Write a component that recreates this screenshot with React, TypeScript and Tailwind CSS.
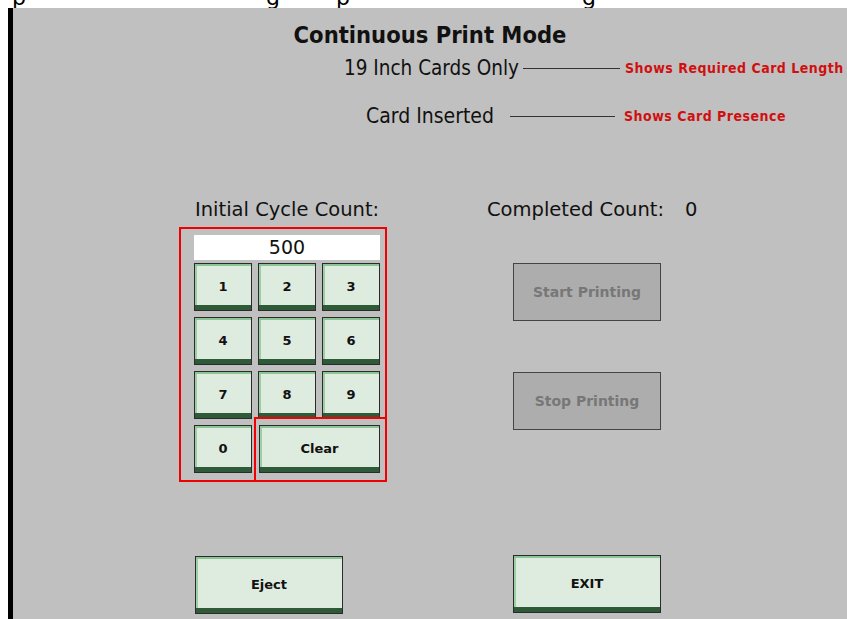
import React from 'react';

const KeyButton = ({ label, className }: { label: string; className: string }) => (
  <button
    className={`flex items-center justify-center border border-[#2b2b2b] bg-[#deebdf] text-[13px] font-bold text-[#111] shadow-[inset_0_-5px_0_#2f5a38,inset_0_2px_0_#8cc595,inset_2px_0_0_#9ccfa3] ${className}`}
  >
    <span className="-mt-[1px]">{label}</span>
  </button>
);

const GrayButton = ({ label }: { label: string }) => (
  <button className="flex h-[58px] w-[148px] items-center justify-center border border-[#444] bg-[#adadad] text-[14px] font-bold text-[#777]">
    {label}
  </button>
);

export default function App() {
  const keys = ['1', '2', '3', '4', '5', '6', '7', '8', '9'];

  return (
    <div className="flex h-[619px] w-[847px] flex-col overflow-hidden bg-white font-['DejaVu_Sans',sans-serif] text-[#111]">
      {/* clipped line of text above the window */}
      <div className="h-[8px] overflow-hidden">
        <div className="-mt-[15px] flex text-[22px] leading-[26px] text-black">
          <span className="w-[266px] pl-[12px]">p</span>
          <span className="w-[70px]">g</span>
          <span className="w-[246px]">p</span>
          <span>g</span>
        </div>
      </div>

      <div className="flex flex-1 pl-[8px]">
        <div className="w-[5px] bg-black" />
        <div className="flex flex-1 flex-col bg-[#c0c0c0]">
          <h1 className="mt-[13px] text-center font-['DejaVu_Sans_Condensed',sans-serif] text-[23.5px] font-bold leading-[28px]">
            Continuous Print Mode
          </h1>

          <div className="mt-[7px] flex items-center pl-[331px] font-['DejaVu_Sans_Condensed',sans-serif] leading-[24px]">
            <span className="w-[179px] whitespace-nowrap text-[20.5px]">19 Inch Cards Only</span>
            <span className="h-px w-[97px] bg-[#333]" />
            <span className="ml-[5px] whitespace-nowrap text-[14px] font-bold tracking-[0.5px] text-[#d01010]">
              Shows Required Card Length
            </span>
          </div>

          <div className="mt-[24px] flex items-center pl-[353px] font-['DejaVu_Sans_Condensed',sans-serif] leading-[24px]">
            <span className="w-[144px] whitespace-nowrap text-[21px]">Card Inserted</span>
            <span className="h-px w-[105px] bg-[#333]" />
            <span className="ml-[9px] whitespace-nowrap text-[14px] font-bold tracking-[0.5px] text-[#d01010]">
              Shows Card Presence
            </span>
          </div>

          <div className="mt-[71px] flex pl-[166px]">
            {/* left column */}
            <div className="flex w-[208px] flex-col">
              <div className="ml-[16px] whitespace-nowrap text-[19.5px] leading-[22px]">Initial Cycle Count:</div>
              <div className="relative mt-[6px] h-[255px] w-[208px] border-2 border-[#f00000] pl-[13px] pt-[6px]">
                <div className="flex h-[25px] w-[186px] items-center justify-center bg-white text-[19px] leading-none">
                  500
                </div>
                <div className="mt-[3px] grid w-[186px] grid-cols-[58px_58px_58px] gap-x-[6px] gap-y-[6px]">
                  {keys.map((k) => (
                    <KeyButton key={k} label={k} className="h-[48px] w-[58px]" />
                  ))}
                  <KeyButton label="0" className="h-[48px] w-[58px]" />
                  <div className="col-span-2 flex">
                    <KeyButton label="Clear" className="ml-[1px] h-[48px] w-[123px]" />
                  </div>
                </div>
                <div className="absolute -right-[2px] -bottom-[2px] h-[65px] w-[133px] border-2 border-[#f00000]" />
              </div>
              <KeyButton label="Eject" className="ml-[16px] mt-[74px] h-[58px] w-[148px]" />
            </div>

            {/* right column */}
            <div className="ml-[100px] flex flex-col">
              <div className="flex whitespace-nowrap text-[19.5px] leading-[22px]">
                <span className="w-[198px]">Completed Count:</span>
                <span>0</span>
              </div>
              <div className="ml-[26px] mt-[42px]">
                <GrayButton label="Start Printing" />
              </div>
              <div className="ml-[26px] mt-[51px]">
                <GrayButton label="Stop Printing" />
              </div>
              <KeyButton label="EXIT" className="ml-[26px] mt-[125px] h-[58px] w-[148px]" />
            </div>
          </div>
        </div>
      </div>
    </div>
  );
}
